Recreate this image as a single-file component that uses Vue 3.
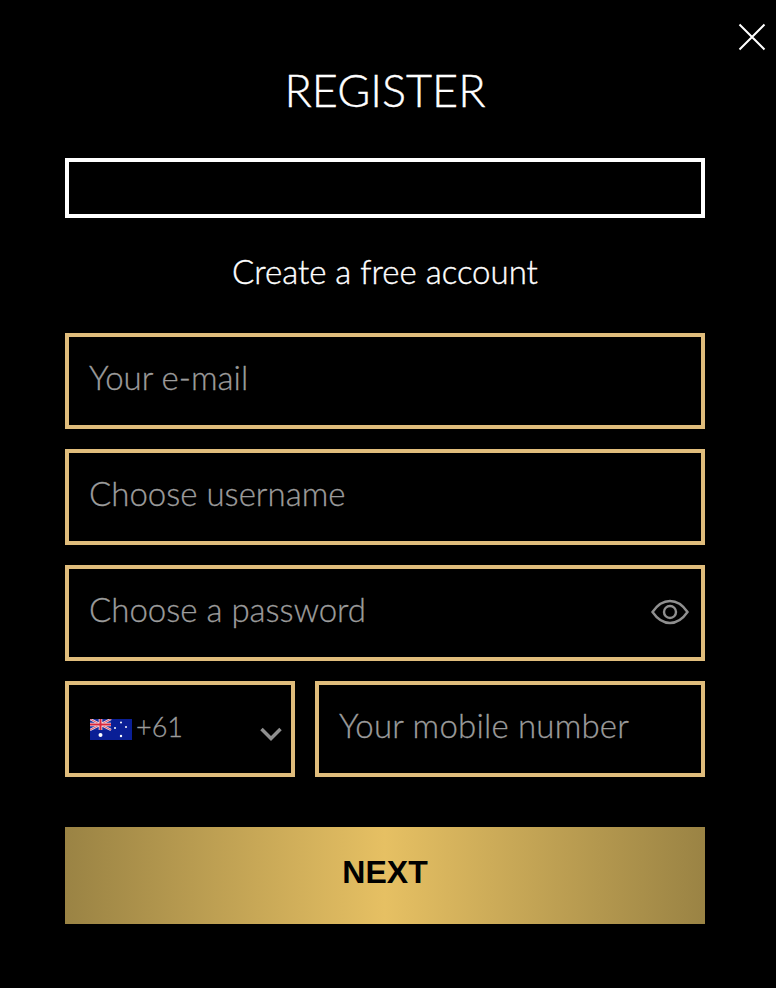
<script setup>
const fields = ['Your e-mail', 'Choose username']
</script>

<template>
	<div class="modal">
		<button class="close" aria-label="Close">
			<svg width="28" height="28" viewBox="0 0 28 28">
				<path d="M1.500 1.500 L26.500 26.500 M26.500 1.500 L1.500 26.500" stroke="#fff" stroke-width="2" fill="none" />
			</svg>
		</button>
		<h1 class="title">REGISTER</h1>
		<div class="empty-box"></div>
		<p class="subtitle">Create a free account</p>

		<div class="fields">
			<div v-for="f in fields" :key="f" class="field">
				<span class="placeholder">{{ f }}</span>
			</div>
			<div class="field">
				<span class="placeholder">Choose a password</span>
				<svg class="eye" width="38" height="26" viewBox="0 0 38 26" fill="none" stroke="#8f8f8f" stroke-width="2.400">
					<path d="M1.500 13 C7 5 13 2 19 2 C25 2 31 5 36.500 13 C31 21 25 24 19 24 C13 24 7 21 1.500 13 Z" />
					<circle cx="19" cy="13" r="6" />
				</svg>
			</div>
			<div class="phone-row">
				<div class="field country">
					<svg class="flag" width="42" height="21" viewBox="0 0 42 21">
						<rect width="42" height="21" fill="#0a1f96" />
						<rect width="21" height="11" fill="#1b2f9e" />
						<path d="M0 0 L21 11 M21 0 L0 11" stroke="#f4e4ea" stroke-width="2.400" />
						<path d="M0 0 L21 11 M21 0 L0 11" stroke="#d8263c" stroke-width="0.800" />
						<path d="M10.500 0 V11 M0 5.500 H21" stroke="#f4e4ea" stroke-width="3.600" />
						<path d="M10.500 0 V11 M0 5.500 H21" stroke="#d8263c" stroke-width="2" />
						<circle cx="10.500" cy="16" r="2" fill="#fff" />
						<circle cx="31" cy="3.500" r="1" fill="#fff" />
						<circle cx="25" cy="9" r="1" fill="#fff" />
						<circle cx="36" cy="8" r="1" fill="#fff" />
						<circle cx="31" cy="17" r="1.200" fill="#fff" />
					</svg>
					<span class="placeholder code">+61</span>
					<svg class="chevron" width="22" height="14" viewBox="0 0 22 14" fill="none" stroke="#8f8f8f" stroke-width="3.500">
						<path d="M1.500 2 L11 11.500 L20.500 2" />
					</svg>
				</div>
				<div class="field mobile">
					<span class="placeholder">Your mobile number</span>
				</div>
			</div>
		</div>

		<button class="next">NEXT</button>
	</div>
</template>

<style scoped>
.modal {
	position: relative;
	box-sizing: border-box;
	width: 776px;
	height: 988px;
	padding: 0 71px 0 65px;
	background: #000;
	color: #fff;
	font-family: Lato, "Open Sans", sans-serif;
	font-weight: 300;
}

.close {
	position: absolute;
	top: 23px;
	right: 10px;
	padding: 0;
	border: 0;
	background: none;
	line-height: 0;
}

.title {
	margin: 0;
	padding-top: 61px;
	height: 158px;
	box-sizing: border-box;
	font-size: 45px;
	font-weight: 300;
	line-height: 58px;
	text-align: center;
	-webkit-text-stroke: 0.4px #fff;
}

.empty-box {
	height: 60px;
	box-sizing: border-box;
	border: 4px solid #fff;
}

.subtitle {
	margin: 0;
	height: 115px;
	padding-top: 33px;
	box-sizing: border-box;
	font-size: 33px;
	line-height: 40px;
	text-align: center;
	-webkit-text-stroke: 0.4px #fff;
}

.fields {
	display: flex;
	flex-direction: column;
	gap: 20px;
}

.field {
	display: flex;
	align-items: center;
	box-sizing: border-box;
	height: 96px;
	padding: 0 20px;
	border: 4px solid #e0bd7c;
}

.placeholder {
	color: #9c9c9c;
	font-size: 33px;
	line-height: 40px;
	margin-top: -9px;
	-webkit-text-stroke: 0.3px #9c9c9c;
}

.eye {
	margin-left: auto;
	margin-right: -8px;
	margin-top: -3px;
}

.phone-row {
	display: flex;
	gap: 20px;
}

.country {
	width: 230px;
	flex: none;
}

.flag {
	flex: none;
	margin-left: 1px;
}

.code {
	margin-left: 4px;
	margin-top: -5px;
	font-size: 27px;
}

.chevron {
	margin-left: auto;
	margin-right: -11px;
	margin-top: 9px;
}

.mobile {
	flex: 1;
}

.mobile .placeholder {
	letter-spacing: 0.2px;
}

.next {
	display: block;
	width: 100%;
	height: 97px;
	margin-top: 50px;
	padding: 0 0 6px;
	border: 0;
	background: linear-gradient(90deg, #9a8344 0%, #e6c063 50%, #9a8344 100%);
	color: #000;
	font-family: "Liberation Sans", Arial, sans-serif;
	font-size: 32px;
	font-weight: 700;
}
</style>
